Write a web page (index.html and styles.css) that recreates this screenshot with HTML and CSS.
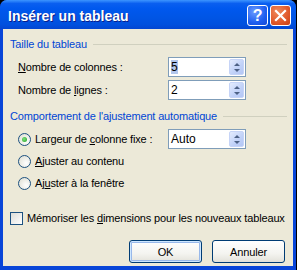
FILE: index.html
```html
<!DOCTYPE html>
<html lang="fr">

<head>
    <meta charset="UTF-8">
    <title>Insérer un tableau</title>
    <link rel="stylesheet" href="styles.css">
</head>

<body>
    <div class="window">
        <!-- barre de titre -->
        <div class="titlebar">
            <span class="title">Insérer un tableau</span>
            <div class="caption-btn help">?</div>
            <div class="caption-btn close">
                <svg width="13" height="13" viewBox="0 0 13 13">
                    <path d="M2 2 L11 11 M11 2 L2 11" stroke="#fff" stroke-width="2.2" stroke-linecap="square" />
                </svg>
            </div>
        </div>

        <div class="client">
            <div class="legend">
                <span>Taille du tableau</span>
                <div class="rule"></div>
            </div>
            <div class="field">
                <span class="label"><u>N</u>ombre de colonnes :</span>
                <div class="spin">
                    <span class="value"><span class="sel">5</span></span>
                    <div class="spin-btn"><i class="up"></i><i class="down"></i></div>
                </div>
            </div>
            <div class="field">
                <span class="label">Nombre de <u>l</u>ignes :</span>
                <div class="spin">
                    <span class="value">2</span>
                    <div class="spin-btn"><i class="up"></i><i class="down"></i></div>
                </div>
            </div>

            <div class="legend second">
                <span>Comportement de l'ajustement automatique</span>
                <div class="rule"></div>
            </div>
            <div class="option first">
                <span class="radio checked"></span>
                <span class="label">Largeur de <u>c</u>olonne fixe :</span>
                <div class="spin">
                    <span class="value">Auto</span>
                    <div class="spin-btn"><i class="up"></i><i class="down"></i></div>
                </div>
            </div>
            <div class="option">
                <span class="radio"></span>
                <span class="label"><u>A</u>juster au contenu</span>
            </div>
            <div class="option">
                <span class="radio"></span>
                <span class="label">Aj<u>u</u>ster à la fenêtre</span>
            </div>

            <div class="check-row">
                <span class="checkbox"></span>
                <span class="label">Mémoriser les <u>d</u>imensions pour les nouveaux tableaux</span>
            </div>

            <div class="buttons">
                <div class="button default">OK</div>
                <div class="button">Annuler</div>
            </div>
        </div>
    </div>
</body>

</html>
```

FILE: styles.css
```css
* {
    box-sizing: border-box;
}

body {
    margin: 0;
    background: #000;
    font-family: "Liberation Sans", Arial, sans-serif;
    font-size: 11px;
    letter-spacing: -0.15px;
    color: #000;
}

.window {
    width: 296px;
    height: 270px;
    background: #0845d8;
    border-radius: 7px 7px 0 0;
    display: flex;
    flex-direction: column;
    overflow: hidden;
}

/* barre de titre */

.titlebar {
    height: 29px;
    flex: none;
    display: flex;
    align-items: center;
    padding: 0 5px 0 8px;
    background: linear-gradient(#3d95ff 0%, #0a5ff0 12%, #0058ee 30%, #0055e5 60%, #0050de 85%, #0346d1 100%);
}

.title {
    flex: 1;
    color: #fff;
    font-weight: bold;
    font-size: 14px;
    letter-spacing: 0;
    text-shadow: 1px 1px 0 #0a1e8a;
    padding-top: 2px;
}

.caption-btn {
    width: 21px;
    height: 21px;
    border: 1px solid #fff;
    border-radius: 3px;
    display: flex;
    align-items: center;
    justify-content: center;
    margin-left: 2px;
    margin-top: 2px;
}

.help {
    background: radial-gradient(circle at 35% 30%, #6c9cff, #1f5ff0 60%, #1348d6);
    color: #fff;
    font-weight: bold;
    font-size: 16px;
}

.close {
    background: radial-gradient(circle at 35% 30%, #f08a5c, #e0582a 60%, #c93f12);
}

/* zone client */

.client {
    flex: 1;
    margin: 0 3px 4px 3px;
    background: #ece9d8;
    padding: 8px 6px 0 7px;
}

.legend {
    display: flex;
    align-items: center;
    color: #0046d5;
    height: 14px;
}

.legend.second {
    margin-top: 9px;
}

.rule {
    flex: 1;
    height: 1px;
    background: #d0d0bf;
    margin-left: 6px;
}

.field {
    display: flex;
    align-items: center;
    height: 20px;
    margin-top: 3px;
    padding-left: 8px;
}

.legend + .field {
    margin-top: 6px;
}

.field .label {
    width: 150px;
}

.option .label {
    width: 133px;
}

.spin {
    width: 78px;
    height: 20px;
    border: 1px solid #7f9db9;
    background: #fff;
    display: flex;
    align-items: center;
    padding: 1px;
}

.spin .value {
    flex: 1;
    padding-left: 1px;
    font-size: 12px;
    letter-spacing: 0;
}

.sel {
    background: #b2c6ec;
}

.spin-btn {
    width: 15px;
    height: 16px;
    border-radius: 2px;
    background: linear-gradient(135deg, #e4ecfe, #c0d1f8 60%, #b3c6f5);
    border: 1px solid #c6d4f7;
    display: flex;
    flex-direction: column;
    align-items: center;
    justify-content: center;
    gap: 3px;
}

.spin-btn i {
    width: 0;
    height: 0;
    border-left: 3px solid transparent;
    border-right: 3px solid transparent;
}

.spin-btn .up {
    border-bottom: 3px solid #4d6185;
}

.spin-btn .down {
    border-top: 3px solid #4d6185;
}

.option {
    display: flex;
    align-items: center;
    height: 20px;
    margin-top: 2px;
    padding-left: 8px;
}

.option.first {
    margin-top: 6px;
}

.radio {
    width: 13px;
    height: 13px;
    border-radius: 50%;
    border: 1px solid #1c5180;
    background: radial-gradient(circle at 65% 65%, #fff, #e6e6dd 70%, #d4d4cc);
    margin-right: 4px;
    display: flex;
    align-items: center;
    justify-content: center;
    flex: none;
}

.radio.checked:after {
    content: '';
    width: 5px;
    height: 5px;
    border-radius: 50%;
    background: radial-gradient(circle at 40% 40%, #7ee07e, #21a121);
}

.check-row {
    display: flex;
    align-items: center;
    height: 14px;
    margin-top: 18px;
    white-space: nowrap;
}

.checkbox {
    width: 13px;
    height: 13px;
    border: 1px solid #1c5180;
    background: linear-gradient(135deg, #dcdcd7, #fff);
    margin-right: 4px;
    flex: none;
}

.buttons {
    display: flex;
    justify-content: flex-end;
    gap: 10px;
    margin-top: 15px;
    padding-right: 2px;
}

.button {
    width: 73px;
    height: 23px;
    border: 1px solid #003c74;
    border-radius: 3px;
    background: linear-gradient(#fff, #f4f4f0 60%, #e3e2da);
    display: flex;
    align-items: center;
    justify-content: center;
}

.button.default {
    box-shadow: inset 0 0 0 1px #cee7ff, inset 0 0 0 2px #98b8ea;
}
```
